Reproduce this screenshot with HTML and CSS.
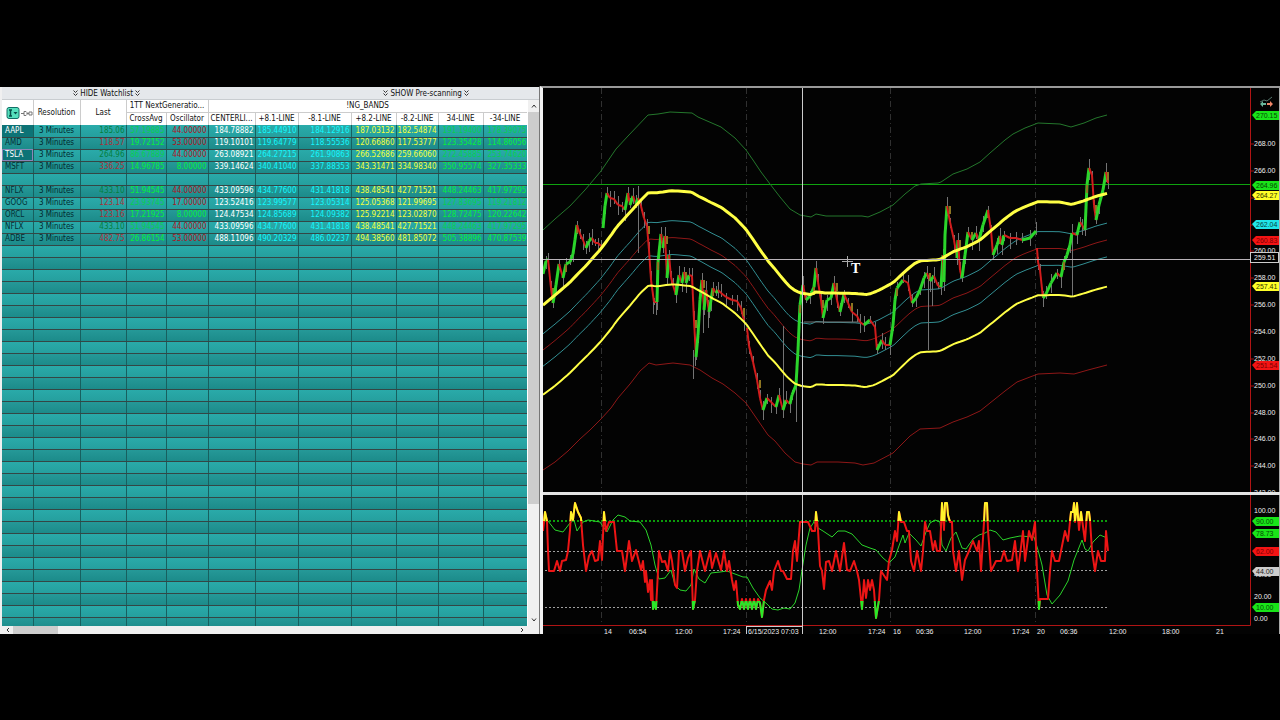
FILE: index.html
```html
<!DOCTYPE html>
<html lang="en">
<head>
<meta charset="utf-8">
<title>Watchlist and chart</title>
<link rel="stylesheet" href="styles.css">
</head>
<body>
<main class="workspace">
  <section class="watchlist" aria-label="Watchlist">
    <div class="toggles">
      <button class="toggle" type="button"><svg class="chev" viewBox="0 0 5 6"><path d="M0.5 0.5l2 2 2-2M0.5 3.5l2 2 2-2"/></svg>HIDE Watchlist<svg class="chev" viewBox="0 0 5 6"><path d="M0.5 0.5l2 2 2-2M0.5 3.5l2 2 2-2"/></svg></button>
      <button class="toggle toggle-scan" type="button"><svg class="chev" viewBox="0 0 5 6"><path d="M0.5 0.5l2 2 2-2M0.5 3.5l2 2 2-2"/></svg>SHOW Pre-scanning<svg class="chev" viewBox="0 0 5 6"><path d="M0.5 0.5l2 2 2-2M0.5 3.5l2 2 2-2"/></svg></button>
    </div>
    <div class="grid-area">
      <div class="grid-clip">
        <table class="quotes">
          <colgroup>
            <col class="w31"><col class="w47"><col class="w46"><col class="w40"><col class="w42"><col class="w47"><col class="w43"><col class="w53"><col class="w45"><col class="w42"><col class="w45"><col class="w44">
          </colgroup>
          <thead>
            <tr>
              <th rowspan="2" class="icon-head"><button class="menu-btn" type="button" aria-label="Symbol menu"><svg viewBox="0 0 27 12"><rect x="1" y="0.5" width="12" height="11" rx="2" fill="#55e0bd" stroke="#126f67"/><path d="M3 3h3M4.500 3v6M3 9h3" stroke="#064d49" stroke-width="1.500"/><path d="M7.500 5h4l-2 2.500z" fill="#064d49"/><path d="M15 6.500h3M18 4.500v4h2l1-1v-2l-1-1zM21 6.500h2M23 5v3h3v-3z" fill="none" stroke="#777"/></svg></button></th>
              <th rowspan="2">Resolution</th>
              <th rowspan="2">Last</th>
              <th colspan="2" class="group">1TT NextGeneratio...</th>
              <th colspan="7" class="group">!NG_BANDS</th>
            </tr>
            <tr class="sub"><th>CrossAvg</th><th>Oscillator</th><th>CENTERLI...</th><th>+8.1-LINE</th><th>-8.1-LINE</th><th>+8.2-LINE</th><th>-8.2-LINE</th><th>34-LINE</th><th>-34-LINE</th></tr>
          </thead>
          <tbody id="rows"></tbody>
        </table>
      </div>
      <div class="vscroll">
        <button type="button" aria-label="Scroll up"><svg viewBox="0 0 6 6"><path d="M1 4.500l2-2.500 2 2.500"/></svg></button>
        <div class="vtrack"><div class="vthumb"></div></div>
        <button type="button" aria-label="Scroll down"><svg viewBox="0 0 6 6"><path d="M1 1.500l2 2.500 2-2.500"/></svg></button>
      </div>
    </div>
    <div class="hscroll">
      <button type="button" aria-label="Scroll left"><svg viewBox="0 0 6 6"><path d="M4 1l-2 2 2 2"/></svg></button>
      <div class="htrack"><div class="hthumb"></div></div>
      <button type="button" aria-label="Scroll right"><svg viewBox="0 0 6 6"><path d="M2 1l2 2-2 2"/></svg></button>
    </div>
  </section>

  <section class="charts" aria-label="TSLA chart">
    <svg class="pane price" id="price" viewBox="543 88 737 404">
      <g class="sessions"><path d="M601.500 88V492M746.500 88V492M890.500 88V492M1035.500 88V492"/></g>
      <path class="last-line" d="M543 184.500H1250"/>
      <g id="bands"></g>
      <g id="candles"></g>
      <g id="main-bands"></g>
      <path class="cross-h" d="M543 259.500H1250"/>
      <path class="cross-v" d="M802.500 88V492"/>
      <path class="cursor" d="M842 261.500H853M847.500 256V267"/>
      <text class="cursor-t" x="851" y="273">T</text>
      <path class="axis" d="M1250.500 88V492"/>
      <g id="price-axis"></g>
      <path d="M1260 102l4-2 3 1 5-4" fill="none" stroke="#56766d"/>
      <path d="M1260 104l3-3v2h3v2h-3v2z" fill="#69b79c"/><path d="M1273 104l-3-3v2h-3v2h3v2z" fill="#ef8568"/>
      <path class="edge" d="M1279.500 88V492"/>
    </svg>
    <svg class="pane osc" id="osc" viewBox="543 495 737 139">
      <defs>
        <clipPath id="over"><rect x="543" y="495" width="700" height="26"/></clipPath>
        <clipPath id="under"><rect x="543" y="601" width="700" height="30"/></clipPath>
      </defs>
      <g class="sessions"><path d="M601.500 495V625M746.500 495V625M890.500 495V625M1035.500 495V625"/></g>
      <path class="level level-top" d="M545 521H1108"/>
      <path class="level" d="M545 551.500H1108M545 570.500H1108M545 607.500H1108"/>
      <g id="osc-lines"></g>
      <path class="axis" d="M543 625.500H1250.500V495"/>
      <path class="cross-v" d="M802.500 495V634"/>
      <g id="osc-axis"></g>
      <g id="time-axis"></g>
      <path class="edge" d="M1279.500 495V634"/>
    </svg>
  </section>
</main>
<script src="chart.js"></script>
</body>
</html>
```

FILE: styles.css
```css
* { box-sizing: border-box; }
body {
  margin: 0;
  min-height: 100vh;
  display: grid;
  align-content: center;
  background: #000;
  font-family: "DejaVu Sans Condensed", "Noto Sans", sans-serif;
  font-size: 8px;
}
button { border: 0; padding: 0; margin: 0; background: none; font: inherit; color: inherit; display: flex; align-items: center; justify-content: center; }
.workspace { display: grid; grid-template-columns: 27fr 37fr; }

.watchlist { contain: size; display: flex; flex-direction: column; background: #f0f0f0; padding-left: 2px; border-top: 1px solid #000; border-right: 1px solid #777; }
.toggles { display: flex; align-items: center; height: 13px; flex: none; background: #e5e8eb; border-bottom: 1px solid #c9cdd0; color: #111; }
.toggle { width: 39%; gap: 2px; height: 12px; }
.toggle-scan { width: auto; flex: 1; padding-left: 102px; }
.chev { width: 5px; height: 6px; fill: none; stroke: #333; stroke-width: 1; }
.grid-area { flex: 1; min-height: 0; display: flex; }
.grid-clip { flex: 1; min-width: 0; overflow: hidden; background: #249c9a; }
.quotes { width: 100%; table-layout: fixed; border-collapse: collapse; }
.w31 { width: 31px; } .w40 { width: 40px; } .w42 { width: 42px; } .w43 { width: 43px; } .w44 { width: 44px; }
.w45 { width: 45px; } .w46 { width: 46px; } .w47 { width: 47px; } .w53 { width: 53px; }
.quotes th { height: 12px; padding: 0; background: #fff; color: #111; font-weight: normal; line-height: 10px; white-space: nowrap; overflow: hidden; border-right: 1px solid #ccc; }
.quotes .group { border-bottom: 1px solid #ccc; }
.quotes .sub th { height: 13px; }
.menu-btn { width: 28px; margin-left: 3px; }
.menu-btn svg { width: 27px; height: 12px; }
.quotes td { height: 12px; padding: 0 1px; line-height: 10px; white-space: nowrap; overflow: hidden; text-align: right; border-right: 1px solid #17605f; border-bottom: 1px solid #344645; }
.quotes tbody tr { background: linear-gradient(#2aabaa, #259f9e); }
.quotes tbody tr:nth-child(even) { background: linear-gradient(#269a99, #1c8b8a); }
.quotes td.sym { text-align: left; padding-left: 3px; color: #032f34; }
.quotes td.sym.picked { color: #fff; background: #0d7376; }
.quotes td.sym.active { outline: 1px solid #8a86b8; outline-offset: -1px; }
.quotes td.res { text-align: center; color: #022a2f; }
.quotes td.cut { text-align: left; padding-left: 4px; }
.up { color: #03803f; } .down { color: #a93239; } .lime { color: #05ee3c; } .dim { color: #05cf50; }
.osc-low { color: #b0141f; } .white { color: #fff; } .aqua { color: #13f6fc; } .yellow { color: #f4ff3c; }
.vscroll { width: 12px; flex: none; display: flex; flex-direction: column; background: #f0f0f0; border-left: 1px solid #fff; }
.vscroll button { height: 12px; }
.vscroll svg, .hscroll svg { width: 6px; height: 6px; fill: none; stroke: #333; stroke-width: 1; }
.vtrack { flex: 1; }
.vthumb { height: 78%; background: #cdcdcd; }
.hscroll { height: 8px; flex: none; display: flex; background: #f0f0f0; padding-right: 12px; }
.hscroll button { width: 11px; }
.htrack { flex: 1; }
.hthumb { width: 9%; height: 100%; background: #cdcdcd; }

.charts { background: #030303; border-left: 3px solid #f2f2f2; border-top: 2px solid #999; }
.pane { display: block; width: 100%; height: auto; font-family: "Liberation Sans", sans-serif; font-size: 7px; }
.osc { border-top: 3px solid #e4e4e4; }
.sessions path { stroke: #303030; stroke-dasharray: 6 3 1 3; }
.last-line { stroke: #0fa30f; }
.cross-h { stroke: #b9b4b9; }
.cross-v { stroke: #ccc; }
.cursor { stroke: #aaa; }
.cursor-t { font: bold 14px "Liberation Serif", serif; fill: #fff; }
.axis { fill: none; stroke: #b01414; }
.edge { stroke: #aaa; }
.level { stroke: #a0a0a0; stroke-dasharray: 2 2; }
.level-top { stroke: #0b9c0b; stroke-width: 2; }
.line { fill: none; stroke-linejoin: round; }
.thin-green { stroke: #24772c; } .thin-cyan { stroke: #328f93; } .thin-red { stroke: #8e1717; }
.band-yellow { stroke: #ffff45; stroke-width: 2; } .band-yellow.thick { stroke-width: 3; }
.bull { stroke: #2bd52b; stroke-width: 3; } .bear { stroke: #d21c1c; stroke-width: 2; } .mixed { stroke: #8d7521; stroke-width: 2; } .wick { stroke: #747474; }
.osc-avg { stroke: #2ad32a; }
.osc-red { stroke: #ed1515; stroke-width: 2; } .osc-over { stroke: #fff42c; stroke-width: 2; } .osc-under { stroke: #29e829; stroke-width: 2; }
.label { fill: #eee; }
.box { fill: #000; stroke: #ccc; }
.tick { stroke: #a51212; }
```

FILE: chart.js
```js
const D = 'down', U = 'up', L = 'lime', M = 'dim', O = 'osc-low';
const quotes = [
  ['AAPL', '185.06', U, '57.19885', M, '44.00000', O, '184.78882', '185.44910', '184.12916', '187.03132', '182.54874', '191.19400', '178.39075', M],
  ['AMD', '118.57', D, '19.72152', L, '53.00000', O, '119.10101', '119.64779', '118.55536', '120.66860', '117.53777', '123.35428', '114.86056', L],
  ['TSLA', '264.96', U, '86.67889', M, '44.00000', O, '263.08921', '264.27215', '261.90863', '266.52686', '259.66060', '272.45885', '253.74620', M],
  ['MSFT', '336.25', D, '14.96785', L, '8.00000', L, '339.14624', '340.41040', '337.88353', '343.31471', '334.98340', '350.95574', '327.35333', L],
  null,
  ['NFLX', '433.10', U, '51.94545', L, '44.00000', O, '433.09596', '434.77600', '431.41818', '438.48541', '427.71521', '448.24463', '417.97295', L],
  ['GOOG', '123.14', D, '23.93745', M, '17.00000', O, '123.52416', '123.99577', '123.05314', '125.05368', '121.99695', '127.83695', '119.21812', M],
  ['ORCL', '123.16', D, '17.21925', L, '8.00000', L, '124.47534', '124.85689', '124.09382', '125.92214', '123.02870', '128.72475', '120.22642', L],
  ['NFLX', '433.10', U, '51.94545', M, '44.00000', O, '433.09596', '434.77600', '431.41818', '438.48541', '427.71521', '448.24463', '417.97295', M],
  ['ADBE', '482.75', D, '26.86154', L, '53.00000', O, '488.11096', '490.20329', '486.02237', '494.38560', '481.85072', '505.38896', '470.87539', L]
];
const cell = (c, t) => `<td class="${c}">${t}</td>`;
let html = '';
for (let i = 0; i < 44; i++) {
  const q = quotes[i];
  if (!q) { html += '<tr>' + '<td></td>'.repeat(12) + '</tr>'; continue; }
  const pick = q[0] === 'AAPL' ? ' picked' : q[0] === 'TSLA' ? ' picked active' : '';
  html += '<tr>' + cell('sym' + pick, q[0]) + cell('res', '3 Minutes') + cell(q[2], q[1]) + cell(q[4], q[3]) + cell(q[6], q[5]) +
    cell('white', q[7]) + cell('aqua', q[8]) + cell('aqua', q[9]) + cell('yellow', q[10]) + cell('yellow', q[11]) +
    cell(q[14], q[12]) + cell('cut ' + q[14], q[13]) + '</tr>';
}
document.getElementById('rows').innerHTML = html;

const pts = s => s.trim().split(/\s+/).map(p => p.split(',').map(Number));
const put = (id, s) => { document.getElementById(id).innerHTML = s; };
const line = (p, c, extra = '') => `<polyline class="line ${c}" points="${p.map(a => a.join()).join(' ')}" ${extra}/>`;

/* Outer bands; the inner ones sit at fixed fractions between them. */
const top34 = pts(`543,230 555,219 570,206 585,190 601,171 616,149 628,136 648,115 658,114 670,112 692,113 698,117 721,127 735,138 746,150 753,160 761,172 770,184 780,197 790,209 800,215 811,217 816,214 826,216 862,216 868,217 880,212 893,205 905,194 915,186 921,184 938,183 941,182 953,174 967,169 980,162 990,153 1005,140 1013,134 1025,128 1038,123 1060,124 1071,127 1084,123 1096,118 1107,115`);
const low34 = pts(`543,470 555,462 568,451 580,439 590,430 601,419 611,408 618,398 630,384 640,371 649,363 656,365 673,363 690,365 700,370 712,378 723,384 735,393 746,403 757,419 768,435 775,441 785,453 795,462 803,464 811,465 817,462 838,462 855,463 863,465 874,463 893,453 900,446 910,436 920,429 940,428 953,422 967,417 980,411 990,403 1005,391 1017,382 1030,377 1038,374 1060,373 1074,374 1088,370 1107,365`);
function at(p, x) {
  for (let i = 1; i < p.length; i++) if (x <= p[i][0]) {
    const [a, b] = p[i - 1], [c, d] = p[i];
    return b + (d - b) * (x - a) / (c - a);
  }
  return p[p.length - 1][1];
}
function band(f) {
  const r = [];
  for (let x = 543; x <= 1108; x += 3) r.push([x, Math.round(10 * (at(top34, x) * (1 - f) + at(low34, x) * f)) / 10]);
  return r;
}
put('bands', line(top34, 'thin-green') + line(band(0.4325), 'thin-cyan') + line(band(0.5), 'thin-red') + line(band(0.5675), 'thin-cyan') + line(low34, 'thin-red'));
put('main-bands', line(band(0.3135), 'band-yellow thick') + line(band(0.6865), 'band-yellow'));

const runs = [
  `543,274 546,261 548,259 551,288 553,303 556,285 559,264 563,278 566,264 570,262 573,254 575,240 577,225 580,234 583,240 586,248 589,241 592,238 595,243 598,243 601,246`,
  `603,228 605,206 607,193 610,198 614,199 618,205 622,206 625,210 628,193 630,205 633,196 636,204 638,198 641,206 644,218 647,226 649,250 651,280 654,302 657,302 658,262 661,234 663,248 665,236 667,278 669,255 671,277 673,285 676,295 679,275 682,283 684,272 686,283 689,275 692,276 694,320 696,357 698,335 700,300 702,280 704,310 706,290 709,312 711,300 713,288 716,293 718,290 721,293 726,297 732,300 737,301 741,308 744,320`,
  `747,328 749,346 753,362 757,380 760,398 763,410 767,398 771,402 776,407 779,395 783,410 786,400 790,404 792,395 796,385 798,350 800,305 803,285 806,300 810,296 814,287 816,268 818,282 821,300 823,318 827,300 831,298 834,283 837,300 840,312 844,294 848,303 852,312 857,316 860,322 864,325 870,320 875,327 877,350 882,340 885,345 890,345 893,325 895,300 897,288 903,280 908,283 912,303 916,298 920,290 924,278 927,273 930,281 934,276 938,286 941,287 943,255 944,282 945,235 947,206 950,222 954,240 957,258 958,240 960,270 962,278 965,255 968,232 972,240 976,233 979,240 983,225 988,210 991,230 993,255 997,245 1000,236 1002,245 1004,235 1010,238 1016,238 1022,240 1030,238 1036,231`,
  `1037,248 1038,262 1040,270 1043,298 1046,294 1051,283 1057,273 1061,277 1064,262 1067,255 1070,245 1072,233 1077,235 1080,222 1082,225 1085,230 1087,185 1089,168 1092,175 1094,205 1096,220 1099,205 1103,190 1106,172 1108,183`
];
let bars = '', wicks = '';
runs.forEach(s => {
  const p = pts(s);
  for (let i = 1; i < p.length; i++) {
    const [a, b] = p[i - 1], [c, d] = p[i];
    const kind = d < b ? 'bull' : 'bear';
    bars += `<path class="${kind}" d="M${a} ${b}L${c} ${d}"/>`;
    if (Math.abs(d - b) > 7 && i % 4 === 0) bars += `<path class="mixed" d="M${c} ${Math.min(b, d)}v8"/>`;
    wicks += `<path class="wick" d="M${c + 0.5} ${d - 4 - i * 7 % 6}V${d + 3 + i * 5 % 9}"/>`;
  }
});
wicks += '<path class="wick" d="M638.500 186V253M653.500 300V314M656.500 300V315M693.500 350V379M695.500 345V366M783.500 326V405M796.500 362V422M703.500 290V333M708.500 300V328M928.500 275V350M932.500 275V306M1072.500 235V297M1089.500 160V180M802.500 280V310M804 322H860"/>';
put('candles', wicks + bars);

const osc = pts(`543,531 545,512 547,521 548,550 549,571 554,571 557,561 560,571 562,561 566,560 568,551 570,530 571,512 573,520 575,503 578,512 581,518 583,545 586,571 589,556 592,551 595,561 598,560 600,541 602,560 604,512 606,531 609,522 614,522 617,551 622,551 625,571 629,541 632,561 636,550 641,570 643,561 645,582 646,571 648,592 650,580 651,600 652,580 653,609 654,602 656,609 658,571 659,551 662,562 665,561 668,571 670,551 672,561 675,585 677,588 679,551 682,551 685,571 688,558 691,551 693,609 695,600 697,571 700,551 705,571 710,551 712,568 716,553 721,570 724,551 727,571 729,561 732,580 734,590 736,581 738,605 740,609 742,599 744,609 746,599 748,609 750,599 752,609 754,599 756,609 758,599 760,603 762,617 764,600 766,590 770,581 772,590 774,571 778,561 781,571 783,571 787,579 791,579 793,551 795,541 797,561 800,522 808,522 812,531 815,531 816,512 818,530 820,566 822,571 824,589 826,562 829,561 832,571 836,551 840,571 844,543 847,570 850,571 854,561 857,571 859,580 862,609 864,580 866,598 868,580 870,590 872,580 874,590 876,618 879,600 881,571 887,580 889,561 892,550 895,531 897,541 899,512 901,522 904,522 907,531 909,531 911,561 914,571 917,551 921,571 923,551 925,522 927,531 930,531 933,550 935,541 937,551 940,551 942,503 944,530 945,503 947,503 948,515 950,522 952,522 953,551 956,571 959,551 962,580 965,560 969,551 973,541 977,551 979,541 981,571 984,522 985,503 987,503 988,530 991,571 996,561 1001,561 1004,551 1007,561 1012,560 1015,541 1018,571 1023,531 1025,561 1029,531 1032,540 1035,522 1037,571 1039,609 1040,599 1048,599 1050,571 1052,551 1055,561 1059,561 1061,551 1065,531 1068,541 1071,512 1073,512 1074,503 1075,522 1077,503 1079,530 1081,512 1085,541 1087,512 1089,512 1090,520 1092,551 1095,571 1098,551 1101,561 1105,561 1106,531 1108,551`);
const avg = pts(`548,521 555,530 563,532 570,523 574,520 577,531 583,522 588,520 600,522 604,528 607,532 613,520 618,515 625,517 630,521 640,522 646,530 651,545 655,565 659,579 665,578 671,570 675,585 680,590 686,591 691,585 694,569 699,579 705,583 711,573 720,572 727,571 735,574 743,577 747,577 753,588 760,598 767,604 772,609 778,610 784,608 790,609 795,603 799,590 802,570 806,545 810,528 814,522 818,528 823,531 832,537 838,531 845,531 852,534 862,545 870,548 876,550 883,558 889,563 895,557 900,543 903,535 905,543 909,533 916,540 921,546 926,532 930,523 935,520 940,522 942,545 946,551 951,538 956,532 962,548 966,549 973,539 979,535 985,533 990,530 996,532 1003,540 1010,538 1020,536 1034,537 1038,550 1042,565 1047,595 1052,604 1060,595 1068,581 1074,560 1082,540 1085,549 1088,551 1093,542 1100,535 1107,538`);
put('osc-lines', line(avg, 'osc-avg') + line(osc, 'osc-red') + line(osc, 'osc-over', 'clip-path="url(#over)"') + line(osc, 'osc-under', 'clip-path="url(#under)"'));

const label = (x, y, t) => `<text class="label" x="${x}" y="${y}">${t}</text>`;
const tag = (y, t, fill, ink) => `<path d="M1252 ${y}l4-4h23v9h-23z" fill="${fill}"/><text x="1256" y="${y + 3}" fill="${ink}">${t}</text>`;
let axis = '';
for (let v = 268; v >= 242; v -= 2) {
  const y = Math.round(144 + (268 - v) * 13.43);
  axis += `<path class="tick" d="M1251 ${y}h3"/>` + label(1254, y + 2, v + '.00');
}
axis += tag(115, '270.15', '#19e419', '#064806') + tag(185, '264.96', '#19e419', '#064806') + tag(195, '264.27', '#ffff28', '#333300') +
  tag(224, '262.04', '#20e5e8', '#063f42') + tag(240, '260.83', '#f31414', '#7c0000') + tag(286, '257.41', '#ffff28', '#333300') + tag(365, '251.54', '#f31414', '#7c0000') +
  '<rect class="box" x="1250.500" y="252.500" width="28" height="10"/>' + label(1254, 260, '259.51');
put('price-axis', axis);
put('osc-axis', label(1254, 513, '100.00') + label(1254, 577, '40.00') + label(1254, 599, '20.00') + label(1254, 621, '0.00') +
  tag(521, '90.00', '#19e419', '#064806') + tag(533, '78.73', '#19e419', '#064806') + tag(551, '62.00', '#f31414', '#7c0000') +
  tag(571, '44.00', '#ccc', '#222') + tag(607, '10.00', '#19e419', '#064806'));
const times = [[604, '14'], [629, '06:54'], [675, '12:00'], [723, '17:24'], [819, '12:00'], [868, '17:24'], [893, '16'], [916, '06:36'], [964, '12:00'], [1012, '17:24'], [1037, '20'], [1060, '06:36'], [1109, '12:00'], [1162, '18:00'], [1216, '21']];
put('time-axis', times.map(([x, t]) => label(x, 634, t)).join('') + '<rect class="box" x="746.500" y="626.500" width="56" height="10"/>' + label(748, 634, '6/15/2023 07:03'));
```
